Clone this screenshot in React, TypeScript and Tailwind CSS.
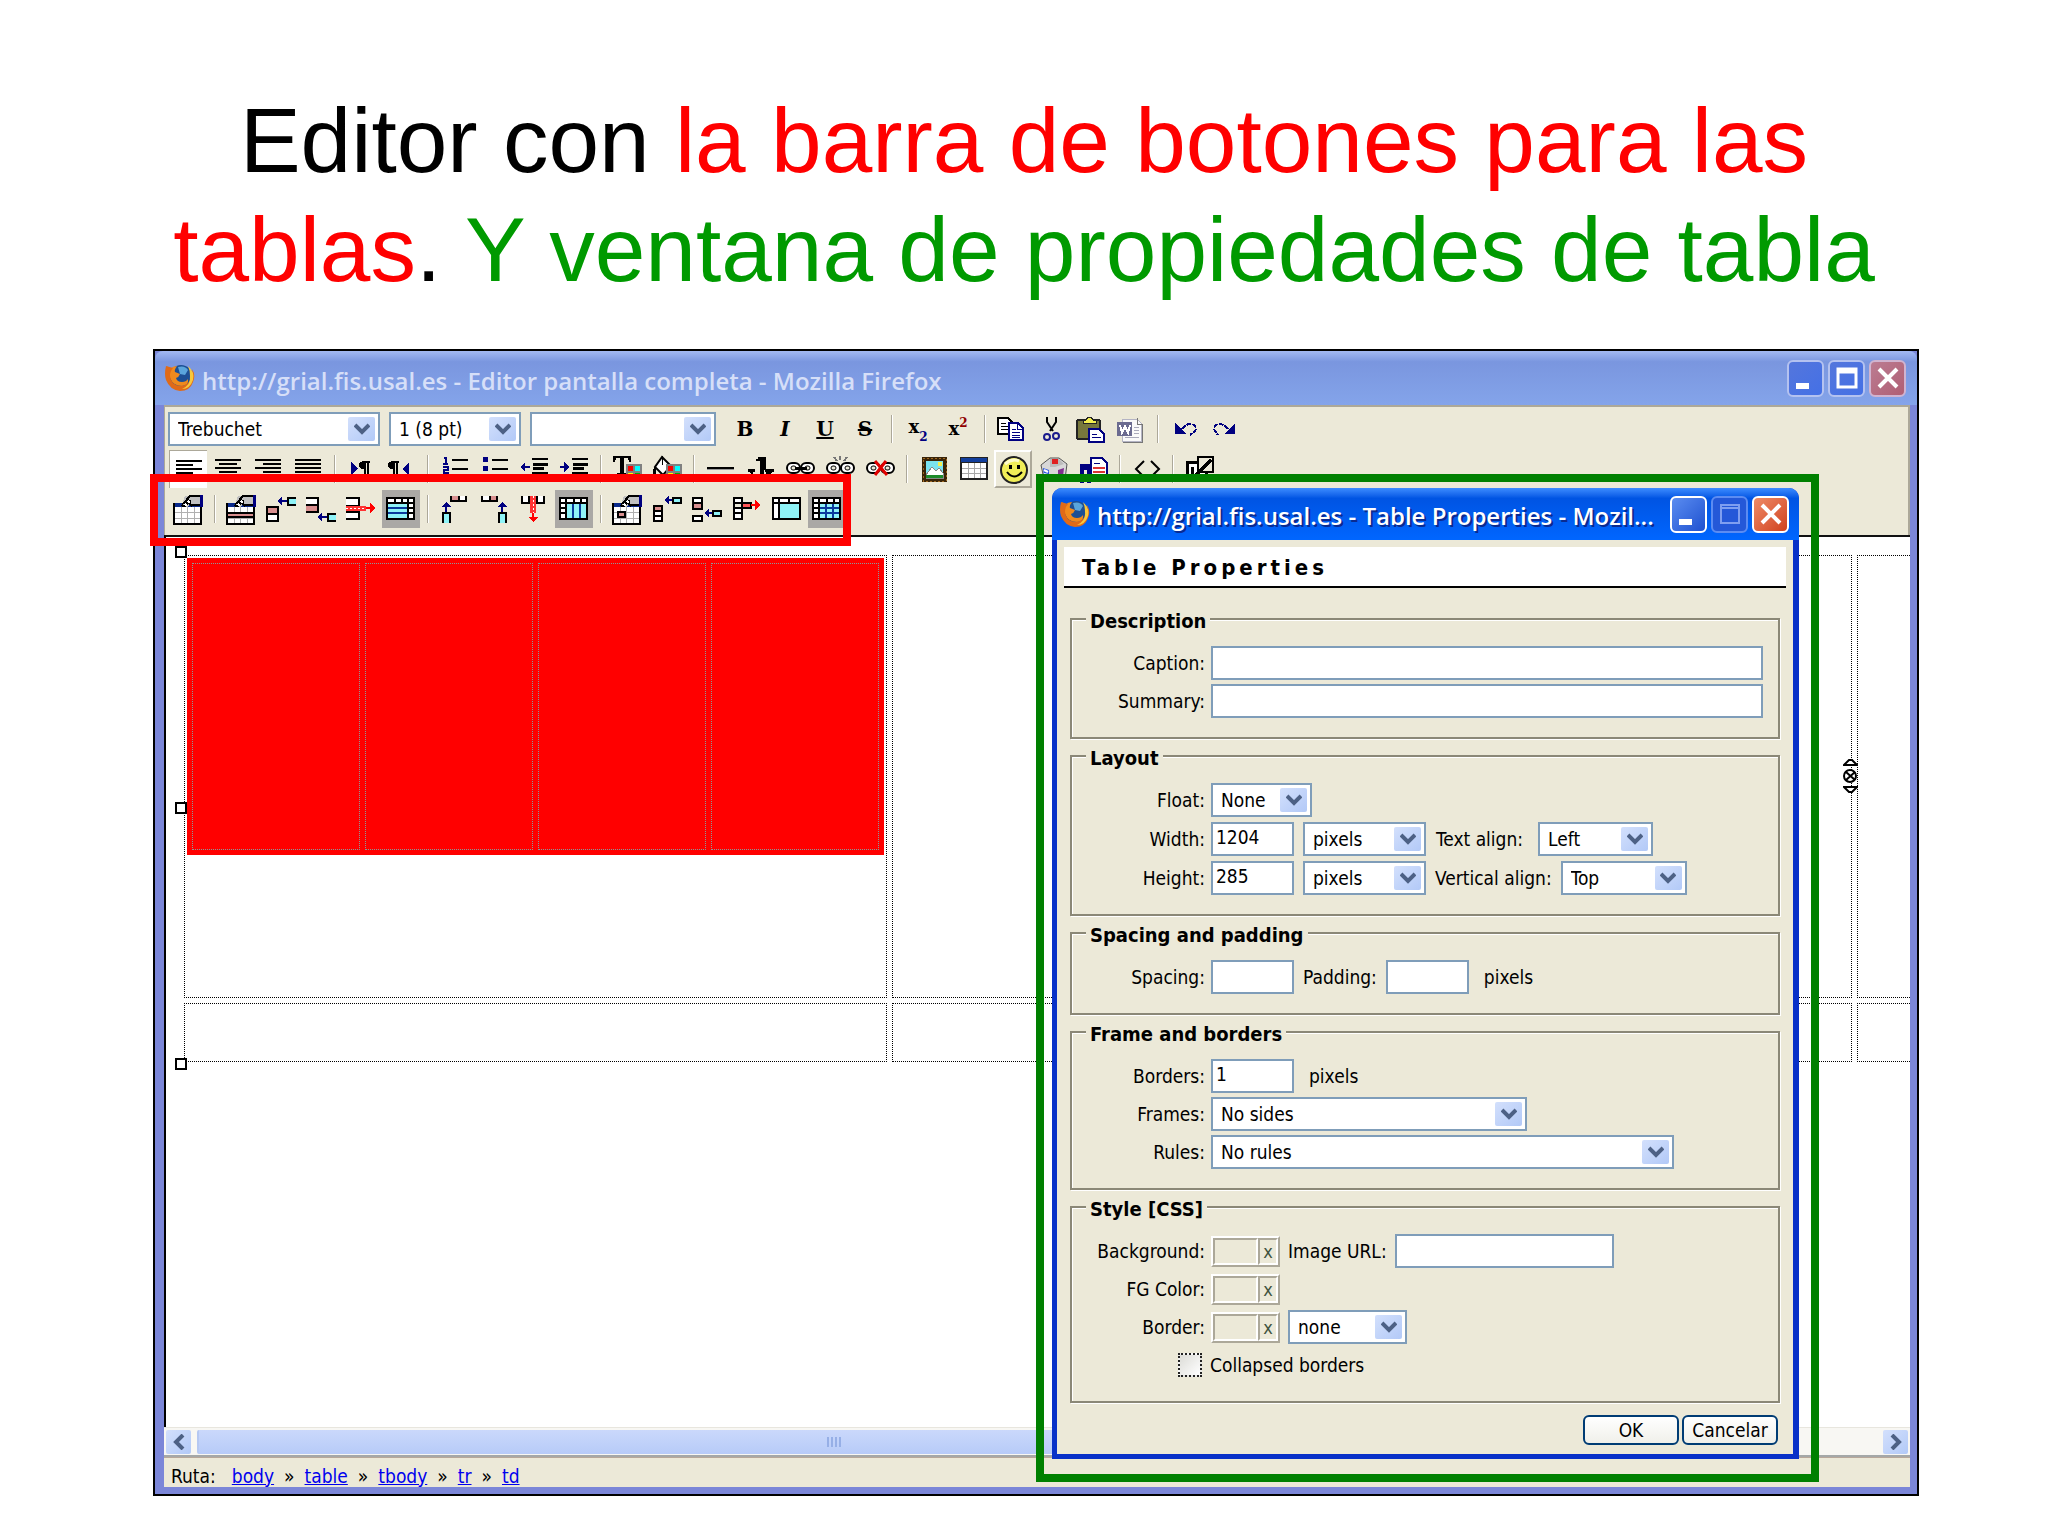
import React from 'react';
import clsx from 'clsx';

const UI_FONT = "font-['DejaVu_Sans_Condensed','DejaVu_Sans',sans-serif]";
const CYAN = '#8ff3f7';
const PINK = '#d98f8f';
const NAVY = '#000080';

/* ---------- toolbar drawings, all on a 28x28 grid ---------- */

const Lines = ({ rows }: { rows: [number, number][] }) => (
  <g fill="#000">
    {rows.map(([x, w], i) => (
      <rect key={i} x={x} y={4 + i * 4} width={w} height="2" />
    ))}
  </g>
);

const ArrowLeft = ({ x, y }: { x: number; y: number }) => (
  <path d={`M${x} ${y}l5 -5v4h5v2h-5v4z`} fill={NAVY} />
);

const ArrowUp = ({ x, y }: { x: number; y: number }) => (
  <path d={`M${x} ${y}l5 5h-4v5h-2v-5h-4z`} fill={NAVY} />
);

const Cell = ({ x, y, w, h, fill = '#fff' }: { x: number; y: number; w: number; h: number; fill?: string }) => (
  <rect x={x} y={y} width={w} height={h} fill={fill} stroke="#000" strokeWidth="2" />
);

const HandTable = ({ children }: { children?: React.ReactNode }) => (
  <>
    <rect x="0" y="9" width="27" height="20" fill="#fff" stroke="#000" strokeWidth="2" />
    <rect x="1" y="8" width="25" height="4" fill="#0a2a8c" />
    <path d="M7 12v16M13 12v16M20 12v16M1 17h25M1 23h25" stroke="#b0b0b0" fill="none" />
    {children}
    <path d="M11 1h15v9h-10l-3 2h-5v-3z" fill="#c0c0c0" />
    <path d="M9 9l7-8h10M26 10h-10" stroke="#000" strokeWidth="2" />
    <path d="M8 10l2 2M12 6l6 5M10 12l6-6M13 4l4 3" stroke="#000" strokeWidth="2" />
    <path d="M11 9l2 2M14 6l2 2" stroke="#fff" strokeWidth="2" />
    <rect x="26" y="0" width="3" height="12" fill={NAVY} />
  </>
);

const TableFrame = ({ children }: { children?: React.ReactNode }) => (
  <>
    <rect x="0" y="3" width="27" height="21" fill="#fff" stroke="#000" strokeWidth="2" />
    {children}
  </>
);

const Swatches = () => (
  <>
    <rect x="13" y="9" width="16" height="16" fill="#808080" />
    <rect x="15" y="11" width="5" height="5" fill="#f00" />
    <rect x="22" y="11" width="5" height="5" fill="#0ff" />
    <rect x="15" y="18" width="5" height="5" fill="#ff0" />
    <rect x="22" y="18" width="5" height="5" fill="#0a0" />
  </>
);

const Chain = () => (
  <g fill="none" shapeRendering="auto">
    <rect x="1" y="8" width="13" height="10" rx="5" stroke="#000" strokeWidth="2" fill="#fff" />
    <rect x="15" y="8" width="13" height="10" rx="5" stroke="#000" strokeWidth="2" fill="#fff" />
    <rect x="5" y="11" width="5" height="4" rx="2" stroke="#000" fill="#ece9d8" />
    <rect x="19" y="11" width="5" height="4" rx="2" stroke="#000" fill="#ece9d8" />
  </g>
);

const Pilcrow = ({ x }: { x: number }) => (
  <path d={`M${x + 4} 6h7v2h-1v15h-2v-15h-1v15h-2v-9h-2l-3-2v-4z`} fill="#000" />
);

const IndentLines = () => (
  <g fill="#000">
    <rect x="12" y="3" width="16" height="2" />
    <rect x="13" y="8" width="15" height="3" />
    <rect x="13" y="12" width="11" height="3" />
    <rect x="12" y="17" width="16" height="2" />
    <rect x="12" y="22" width="16" height="2" />
  </g>
);

const ICONS: Record<string, React.ReactNode> = {
  copy: (
    <>
      <path d="M1 3h10l4 4v12h-14z" fill="#fff" stroke="#000" strokeWidth="2" />
      <path d="M4 8h5M4 11h7M4 14h7" stroke="#000" />
      <path d="M12 8h9l5 5v12h-14z" fill="#fff" stroke={NAVY} strokeWidth="2" />
      <path d="M20 8v6h6M15 14h4M15 17h8M15 20h8M15 22h8" stroke={NAVY} fill="none" />
    </>
  ),
  cut: (
    <g fill="none" shapeRendering="auto">
      <path d="M10 2v5l6 9M19 2v5l-6 9" stroke="#000" strokeWidth="2" />
      <circle cx="10" cy="22" r="3" stroke="#1a1a8c" strokeWidth="2" />
      <circle cx="19" cy="21" r="3" stroke="#1a1a8c" strokeWidth="2" />
    </g>
  ),
  paste: (
    <>
      <rect x="0" y="5" width="23" height="19" rx="2" fill="#77773c" stroke="#222" strokeWidth="2" />
      <path d="M6 8v-3h3l2-3h3l2 3h3v3z" fill="#f2ee50" stroke="#222" />
      <path d="M12 14h10l5 5v8h-15z" fill="#fff" stroke={NAVY} strokeWidth="2" />
      <path d="M15 19h5M15 22h9" stroke={NAVY} />
    </>
  ),
  word: (
    <>
      <path d="M5 4h15l4 4v18h-19z" fill="#fafafa" stroke="#b4b4c4" />
      <path d="M20 3v6h5M6 27h19v-18" stroke="#777" fill="none" />
      <path d="M17 12h5M17 15h5M17 18h5M8 22h14" stroke="#aab" />
      <rect x="0" y="7" width="15" height="14" fill="#6b6b90" />
      <path d="M3 10l2 8 3-7 3 7 2-8" stroke="#fff" strokeWidth="2" fill="none" />
    </>
  ),
  undo: (
    <>
      <path d="M5 8v11h11z" fill={NAVY} />
      <path d="M12 14q5-6 10-5q6 3 3 7l-5 4" stroke={NAVY} strokeWidth="2" fill="none" strokeDasharray="5 1" />
    </>
  ),
  redo: (
    <>
      <path d="M25 8v11h-11z" fill={NAVY} />
      <path d="M18 14q-5-6-10-5q-6 3-3 7l3 4" stroke={NAVY} strokeWidth="2" fill="none" strokeDasharray="5 1" />
    </>
  ),
  alignLeft: <Lines rows={[[1, 26], [1, 17], [1, 26], [1, 17], [1, 26]]} />,
  alignCenter: <Lines rows={[[1, 26], [5, 18], [1, 26], [5, 18], [1, 26]]} />,
  alignRight: <Lines rows={[[1, 26], [9, 18], [1, 26], [9, 18], [1, 26]]} />,
  justify: <Lines rows={[[1, 26], [1, 26], [1, 26], [1, 26], [1, 26]]} />,
  ltr: (
    <>
      <path d="M4 7v13l7-6z" fill={NAVY} />
      <Pilcrow x={12} />
    </>
  ),
  rtl: (
    <>
      <Pilcrow x={1} />
      <path d="M22 7v13l-7-6z" fill={NAVY} />
    </>
  ),
  ol: (
    <>
      <path d="M4 3h2v6M3 9h5M3 12h5v3h-4v3h5" stroke={NAVY} strokeWidth="2" fill="none" />
      <path d="M12 5h16M12 14h16M12 23h16" stroke="#000" strokeWidth="2" />
    </>
  ),
  ul: (
    <>
      <path d="M3 2h5v5h-5zM3 11h5v5h-5zM3 20h5v5h-5z" fill={NAVY} />
      <path d="M12 5h16M12 14h16M12 23h16" stroke="#000" strokeWidth="2" />
    </>
  ),
  outdent: (
    <>
      <path d="M0 12l5-5v4h5v2h-5v4z" fill={NAVY} />
      <IndentLines />
    </>
  ),
  indent: (
    <>
      <path d="M9 12l-5-5v4h-4v2h4v4z" fill={NAVY} />
      <IndentLines />
    </>
  ),
  textColor: (
    <>
      <path d="M0 1h18v6h-2l-1-4h-4v15h3v2h-10v-2h3v-15h-4l-1 4h-2z" fill="#000" />
      <Swatches />
    </>
  ),
  fillColor: (
    <>
      <path d="M9 2l9 9-8 9-8-8z" fill="#fff" stroke="#000" strokeWidth="2" shapeRendering="auto" />
      <path d="M9 1v9M2 12l-2 4v3h3z" stroke="#000" fill="#000" />
      <Swatches />
    </>
  ),
  rule: (
    <>
      <rect x="1" y="12" width="27" height="2" fill="#000" />
      <rect x="1" y="14" width="27" height="1" fill="#999" />
    </>
  ),
  anchor: (
    <>
      <path d="M12 2h8v13h-2v8h-4v-17h-4v-2h2z" fill="#000" />
      <path d="M2 14h7v3h-2v3h13v-3h-1v-3h9v3h-2l-4 8h-14l-4-8h-2z" fill="#000" />
    </>
  ),
  link: (
    <>
      <Chain />
      <rect x="9" y="12" width="12" height="3" fill="#000" />
    </>
  ),
  breakLink: (
    <>
      <Chain />
      <path d="M8 2l3 4M14 1v4M21 2l-3 4" stroke="#777" strokeWidth="2" />
    </>
  ),
  unlink: (
    <>
      <Chain />
      <path d="M9 6l12 14M20 6l-11 14" stroke="#e00000" strokeWidth="3" shapeRendering="auto" />
    </>
  ),
  image: (
    <>
      <rect x="3" y="2" width="25" height="25" fill="#3a2408" />
      <rect x="4" y="3" width="23" height="23" fill="none" stroke="#a06820" strokeDasharray="2 2" />
      <rect x="7" y="6" width="17" height="17" fill="#7be3f0" />
      <path d="M7 20l6-8 4 4 3-3 4 5v5h-17z" fill="#fff" stroke="#888" />
      <rect x="19" y="7" width="4" height="4" fill="#f5ef50" />
      <rect x="7" y="20" width="17" height="3" fill="#1d8a2a" />
    </>
  ),
  table: (
    <>
      <rect x="1" y="2" width="28" height="23" fill="#222" />
      <rect x="2" y="3" width="26" height="4" fill="#123e9c" />
      <rect x="3" y="8" width="24" height="15" fill="#fff" />
      <path d="M9 8v15M15 8v15M21 8v15M3 13h24M3 18h24" stroke="#a8a8a8" />
    </>
  ),
  smiley: (
    <g shapeRendering="auto">
      <circle cx="15" cy="15" r="13" fill="#f1ee58" stroke="#222" strokeWidth="2" />
      <path d="M6 9q7-6 14-3" stroke="#fdfccb" strokeWidth="3" fill="none" />
      <path d="M10 10h3v4h-3zM18 10h3v4h-3z" fill="#000" />
      <path d="M8 17q7 9 15 0" stroke="#000" strokeWidth="2" fill="none" />
    </g>
  ),
  dice: (
    <g shapeRendering="auto">
      <path d="M2 10l9-7h9l8 6-2 15h-21z" fill="#d8d8d8" stroke="#555" />
      <path d="M11 4h9l5 5-9 3h-5z" fill="#bbb" />
      <rect x="13" y="4" width="6" height="5" fill="#e02020" />
      <path d="M4 13l6 2v8h-5z" fill="#2a55e0" />
      <path d="M19 15l6-2-1 9h-5z" fill="#80308c" />
      <path d="M5 15l4 2M5 19l4 1" stroke="#fff" strokeWidth="2" />
    </g>
  ),
  pasteDoc: (
    <>
      <path d="M12 3h11l5 5v17h-16z" fill="#fff" stroke={NAVY} strokeWidth="2" />
      <path d="M15 8h6" stroke={NAVY} />
      <rect x="14" y="12" width="12" height="2" fill="#d33" />
      <rect x="14" y="16" width="12" height="2" fill="#d33" />
      <path d="M1 9h11v19h-4v-13h-3v13h-4z" fill={NAVY} />
    </>
  ),
  source: (
    <path d="M12 6l-8 8 8 8M19 6l8 8-8 8" stroke="#000" strokeWidth="2" fill="none" shapeRendering="auto" />
  ),
  fullscreen: (
    <>
      <rect x="2" y="7" width="19" height="18" fill="#fff" stroke="#000" strokeWidth="3" />
      <rect x="13" y="2" width="15" height="15" fill="#ece9d8" stroke="#000" strokeWidth="2" />
      <path d="M10 21l16-16M7 12v11h9" stroke="#000" strokeWidth="3" fill="none" />
    </>
  ),
  tableProps: <HandTable />,
  rowProps: (
    <HandTable>
      <rect x="0" y="18" width="27" height="4" fill={PINK} stroke="#000" strokeWidth="2" />
    </HandTable>
  ),
  rowAbove: (
    <>
      <Cell x={0} y={19} w={11} h={7} />
      <Cell x={0} y={12} w={11} h={7} fill={PINK} />
      <ArrowLeft x={10} y={6} />
      <path d="M29 3h-8v7h8" fill={CYAN} stroke="#000" strokeWidth="2" />
    </>
  ),
  rowBelow: (
    <>
      <path d="M-1 3h12v7h-12M-1 17h12v-7" fill="#fff" stroke="#000" strokeWidth="2" />
      <rect x="-1" y="11" width="11" height="5" fill={PINK} />
      <ArrowLeft x={10} y={22} />
      <path d="M29 19h-8v7h8" fill={CYAN} stroke="#000" strokeWidth="2" />
    </>
  ),
  rowDelete: (
    <>
      <path d="M-1 3h13v8h-13M-1 24h13v-7h-13" fill="#fff" stroke="#000" strokeWidth="2" />
      <rect x="-1" y="11" width="20" height="5" fill="#f33" />
      <path d="M-1 13h20" stroke="#fff" strokeDasharray="2 2" />
      <path d="M28 13l-5-5v4h-4v2h4v5z" fill="#f00" />
    </>
  ),
  rowSplit: (
    <TableFrame>
      <rect x="1" y="8" width="20" height="15" fill={CYAN} />
      <path d="M1 8h25M8 3v5M15 3v5M21 3v20M21 13h6M21 18h6" stroke="#000" strokeWidth="2" />
      <path d="M1 13h19M1 18h19" stroke="#0a3a9c" strokeWidth="2" />
    </TableFrame>
  ),
  colLeft: (
    <>
      <rect x="11" y="1" width="8" height="6" fill={PINK} />
      <rect x="19" y="1" width="8" height="6" fill="#fff" />
      <path d="M11 1v5h15v-5M19 1v5" stroke="#000" strokeWidth="2" fill="none" />
      <ArrowUp x={6} y={7} />
      <path d="M3 28v-10h7v10" fill={CYAN} stroke="#000" strokeWidth="2" />
    </>
  ),
  colRight: (
    <>
      <rect x="1" y="1" width="8" height="6" fill="#fff" />
      <rect x="9" y="1" width="8" height="6" fill={PINK} />
      <path d="M2 1v5h15v-5M10 1v5" stroke="#000" strokeWidth="2" fill="none" />
      <ArrowUp x={22} y={7} />
      <path d="M19 28v-10h7v10" fill={CYAN} stroke="#000" strokeWidth="2" />
    </>
  ),
  colDelete: (
    <>
      <path d="M2 1v7h7v-7M17 1v7h7v-7" fill="#fff" stroke="#000" strokeWidth="2" />
      <rect x="10" y="1" width="6" height="17" fill="#f33" />
      <path d="M13 1v17" stroke="#fff" strokeDasharray="2 2" />
      <path d="M13 27l5-5h-4v-4h-2v4h-4z" fill="#f00" />
    </>
  ),
  colSplit: (
    <TableFrame>
      <rect x="6" y="8" width="20" height="15" fill={CYAN} />
      <path d="M1 8h25M6 3v20M14 3v5M21 3v5M1 13h5M1 18h5" stroke="#000" strokeWidth="2" />
      <path d="M13 9v14M20 9v14" stroke="#0a3a9c" strokeWidth="2" />
    </TableFrame>
  ),
  cellProps: (
    <HandTable>
      <rect x="5" y="17" width="7" height="5" fill={PINK} stroke="#000" strokeWidth="2" />
    </HandTable>
  ),
  cellBefore: (
    <>
      <Cell x={1} y={21} w={8} h={5} />
      <Cell x={1} y={16} w={8} h={5} />
      <Cell x={1} y={11} w={8} h={5} fill={PINK} />
      <ArrowLeft x={11} y={5} />
      <Cell x={20} y={3} w={8} h={5} fill={CYAN} />
    </>
  ),
  cellAfter: (
    <>
      <Cell x={0} y={3} w={9} h={5} />
      <Cell x={0} y={8} w={9} h={6} fill={PINK} />
      <Cell x={0} y={21} w={9} h={5} />
      <ArrowLeft x={11} y={18} />
      <Cell x={20} y={16} w={8} h={5} fill={CYAN} />
    </>
  ),
  cellDelete: (
    <>
      <Cell x={1} y={3} w={8} h={5} />
      <Cell x={1} y={13} w={8} h={5} />
      <Cell x={1} y={18} w={8} h={6} />
      <path d="M1 8v5" stroke="#000" strokeWidth="2" />
      <rect x="9" y="8" width="9" height="5" fill="#f55" stroke="#000" strokeWidth="2" />
      <path d="M27 10l-5-5v4h-4v2h4v5z" fill="#f00" />
    </>
  ),
  cellMerge: (
    <TableFrame>
      <rect x="6" y="8" width="20" height="15" fill={CYAN} />
      <path d="M1 8h25M6 3v20M16 3v5" stroke="#000" strokeWidth="2" />
    </TableFrame>
  ),
  cellSplit: (
    <TableFrame>
      <rect x="6" y="8" width="20" height="15" fill={CYAN} />
      <path d="M1 8h25M6 3v20M14 3v5M21 3v5M1 13h5M1 18h5" stroke="#000" strokeWidth="2" />
      <path d="M13 9v14M20 9v14M7 13h19M7 18h19" stroke="#0a3a9c" strokeWidth="2" />
    </TableFrame>
  ),
};

const FirefoxIcon = () => (
  <svg viewBox="0 0 30 28" className="h-7 w-[30px] shrink-0" aria-hidden="true">
    <circle cx="16" cy="13" r="12" fill="#1d4f94" />
    <path d="M13 3q7-2 10 3l-3 5-5-1z" fill="#5aa5dc" />
    <path d="M2 2l3 3q3-3 7-3-3 4-2 6l5 2q-1 3-4 4 1 4 6 4 4 0 6-3 1 6-6 7-9 0-12-8z" fill="#f08a1d" />
    <path d="M1 2q-2 8 0 14 4 10 14 11 10 0 13-9 3-7-1-13 1 6-1 9-3 8-11 8-9-1-10-10 0-5 3-8z" fill="#e06a18" />
    <path d="M23 2q7 6 5 14-3 9-11 9 9-4 8-13 0-6-2-10z" fill="#f8c83c" />
  </svg>
);

/* ---------- toolbar parts ---------- */

const ToolButton = ({ name, state }: { name: string; state?: 'on' | 'pressed' | 'raised' }) => (
  <button type="button" aria-label={name} className="flex size-10 items-center justify-center">
    <span
      className={clsx(
        'flex size-[38px] items-center justify-center',
        state === 'on' && 'bg-[#aaa8a5]',
        state === 'pressed' && 'border-t border-l border-[#aca899] bg-white',
        state === 'raised' && 'border-2 border-t-white border-l-white border-r-[#aca899] border-b-[#aca899]',
      )}
    >
      <svg viewBox="0 0 28 28" className="size-7 shrink-0 overflow-visible" shapeRendering="crispEdges" fill="none">
        {ICONS[name]}
      </svg>
    </span>
  </button>
);

const LetterButton = ({ label, children }: { label: string; children: React.ReactNode }) => (
  <button
    type="button"
    aria-label={label}
    className="flex size-10 items-center justify-center font-['DejaVu_Serif',serif] text-xl font-bold"
  >
    {children}
  </button>
);

const Separator = () => (
  <span className="flex h-7 w-[13px] justify-center">
    <span className="w-[2px] border-r border-r-white bg-[#aca899]" />
  </span>
);

const Tools = ({ items }: { items: string[] }) => (
  <>
    {items.map((item, i) => {
      if (item === '|') return <Separator key={i} />;
      const [name, state] = item.split(':');
      return <ToolButton key={i} name={name} state={state as 'on' | 'pressed' | 'raised' | undefined} />;
    })}
  </>
);

const ROW_TWO = [
  'alignLeft:pressed', 'alignCenter', 'alignRight', 'justify', '|', 'ltr', 'rtl', '|', 'ol', 'ul', 'outdent', 'indent',
  '|', 'textColor', 'fillColor', '|', 'rule', 'anchor', 'link', 'breakLink', 'unlink', '|', 'image', 'table',
  'smiley:raised', 'dice', 'pasteDoc', '|', 'source', '|', 'fullscreen',
];

const ROW_THREE = [
  'tableProps', '|', 'rowProps', 'rowAbove', 'rowBelow', 'rowDelete', 'rowSplit:on', '|', 'colLeft', 'colRight',
  'colDelete', 'colSplit:on', '|', 'cellProps', 'cellBefore', 'cellAfter', 'cellDelete', 'cellMerge', 'cellSplit:on',
];

/* ---------- form controls ---------- */

type SelectProps = { value: string; width: string; id?: string; label?: string };

const Select = ({ value, width, id, label }: SelectProps) => (
  <span className={clsx('relative inline-flex h-[34px]', width)}>
    <select
      id={id}
      aria-label={label}
      defaultValue={value}
      className="h-full w-full appearance-none rounded-none border-2 border-[#7f9db9] bg-white pl-2 text-black"
    >
      <option>{value}</option>
    </select>
    <span className="pointer-events-none absolute top-[5px] right-[5px] flex h-6 w-[27px] items-center justify-center rounded-xs bg-gradient-to-br from-[#d3e0fc] to-[#b2c9f7]">
      <svg viewBox="0 0 16 12" className="h-3 w-4" fill="none">
        <path d="M1 2l7 7 7-7" stroke="#4d6185" strokeWidth="4" />
      </svg>
    </span>
  </span>
);

const Input = ({ id, value = '', width }: { id: string; value?: string; width: string }) => (
  <input
    id={id}
    defaultValue={value}
    className={clsx('h-[34px] rounded-none border-2 border-[#7f9db9] bg-white pb-1 pl-[3px] text-black', width)}
  />
);

const Row = ({ label, htmlFor, children }: { label: string; htmlFor: string; children: React.ReactNode }) => (
  <div className="flex h-[34px] items-center">
    <label htmlFor={htmlFor} className="mr-[6px] w-[133px] text-right">{label}</label>
    {children}
  </div>
);

const Group = ({ title, gap = 'gap-1', children }: { title: string; gap?: string; children: React.ReactNode }) => (
  <fieldset className="mx-[13px] mt-[3px] border-2 border-[#8b8877] pb-[19px] shadow-[1px_1px_0_#fff,inset_1px_1px_0_#fff]">
    <legend className="ml-[14px] bg-[#ece9d8] px-1 pt-1 text-xl leading-6 font-bold">{title}</legend>
    <div className={clsx('flex flex-col pt-[13px] pr-[15px]', gap)}>{children}</div>
  </fieldset>
);

const ColorPicker = ({ id }: { id: string }) => (
  <span className="mr-2 flex h-[31px] w-[69px] border-2 border-t-white border-r-[#aca899] border-b-[#aca899] border-l-white">
    <button
      id={id}
      type="button"
      aria-label="color"
      className="flex-1 border-2 border-t-[#aca899] border-r-white border-b-white border-l-[#aca899]"
    />
    <button
      type="button"
      className="w-5 border-2 border-t-[#aca899] border-r-white border-b-white border-l-[#aca899] text-center text-lg leading-6 text-[#40533e]"
    >
      x
    </button>
  </span>
);

/* ---------- window title buttons ---------- */

const TITLE_BUTTON = 'flex size-[37px] items-center justify-center rounded-md border-2';

const TitleButtons = ({ active }: { active?: boolean }) => (
  <div className="ml-auto flex gap-1">
    <button
      type="button"
      aria-label="Minimize"
      className={clsx(
        TITLE_BUTTON,
        active ? 'border-white bg-gradient-to-br from-[#5b8cf0] to-[#1f50d0]' : 'border-[#b4c2f0] bg-gradient-to-br from-[#5476dc] to-[#4470e6]',
      )}
    >
      <svg viewBox="0 0 24 24" className="size-6"><rect x="2" y="17" width="13" height="6" fill="#fff" /></svg>
    </button>
    <button
      type="button"
      aria-label="Maximize"
      className={clsx(
        TITLE_BUTTON,
        active ? 'border-[#5c8cf2] bg-[#2458d8]' : 'border-[#b4c2f0] bg-gradient-to-br from-[#5476dc] to-[#4470e6]',
      )}
    >
      <svg viewBox="0 0 24 24" className="size-6" fill="none">
        <path d="M3 3h18v18h-18zM3 6h18" stroke={active ? '#7f9ff0' : '#fff'} strokeWidth={active ? 2 : 3} />
      </svg>
    </button>
    <button
      type="button"
      aria-label="Close"
      className={clsx(
        TITLE_BUTTON,
        active ? 'border-white bg-gradient-to-br from-[#ee8a66] to-[#d0401a]' : 'border-[#d0b4d0] bg-gradient-to-br from-[#bb7c92] to-[#b05f74]',
      )}
    >
      <svg viewBox="0 0 24 24" className="size-6" fill="none">
        <path d="M3 3l18 18M21 3l-18 18" stroke="#fff" strokeWidth="4" />
      </svg>
    </button>
  </div>
);

/* ---------- windows ---------- */

const Handle = ({ className }: { className: string }) => (
  <span className={clsx('absolute left-[9px] size-3 border-2 border-black bg-white', className)} />
);

const CELL = 'border border-dotted border-black align-top';

const EditArea = () => (
  <div className="relative overflow-hidden border-t-2 border-l-2 border-t-[#111] border-l-black bg-white pt-[13px] pb-[360px] pl-[13px]">
    <table className="w-[calc(100%+5px)] table-fixed border-separate border-spacing-[5px]">
      <colgroup>
        <col className="w-[703px]" />
        <col />
        <col className="w-[53px]" />
      </colgroup>
      <tbody>
        <tr className="h-[443px]">
          <td className={clsx(CELL, 'p-[2px]')}>
            <table className="w-full table-fixed border-separate border-spacing-[5px] bg-[#f00]">
              <tbody>
                <tr className="h-[287px]">
                  {[0, 1, 2, 3].map((n) => (
                    <td key={n} className="border border-dotted border-[#8a9a9a]" />
                  ))}
                </tr>
              </tbody>
            </table>
          </td>
          <td className={CELL} />
          <td className={clsx(CELL, 'border-r-0')} />
        </tr>
        <tr className="h-[59px]">
          <td className={CELL} />
          <td className={CELL} />
          <td className={clsx(CELL, 'border-r-0')} />
        </tr>
      </tbody>
    </table>
    <Handle className="top-[9px]" />
    <Handle className="top-[265px]" />
    <Handle className="top-[521px]" />
    <svg viewBox="0 0 15 36" className="absolute top-[221px] right-[52px] h-9 w-[15px]" fill="#fff" stroke="#000" strokeWidth="2">
      <path d="M1 7h13l-5-5h-3zM1 29h13l-5 5h-3z" />
      <circle cx="7" cy="18" r="6" />
      <path d="M3 14l9 8M12 14l-9 8" />
    </svg>
  </div>
);

const ScrollBar = () => (
  <div className="flex h-[30px] items-center border-t border-b-2 border-t-[#e8e6de] border-b-[#a5a8a8] bg-[#f8f7f3] px-[2px]">
    <button type="button" aria-label="Scroll left" className="flex h-6 w-[25px] items-center justify-center rounded-xs bg-gradient-to-br from-[#d3e0fc] to-[#b2c9f7]">
      <svg viewBox="0 0 12 16" className="h-4 w-3" fill="none"><path d="M10 1l-7 7 7 7" stroke="#4d6185" strokeWidth="4" /></svg>
    </button>
    <div className="ml-1.5 flex h-6 w-[73%] items-center justify-center gap-[2px] rounded-xs border-l-2 border-[#b5c8f2] bg-gradient-to-b from-[#cad8fb] to-[#b7cbf8]">
      {[0, 1, 2, 3].map((n) => (
        <span key={n} className="h-2.5 w-[2px] bg-[#96afe6]" />
      ))}
    </div>
    <button type="button" aria-label="Scroll right" className="ml-auto flex h-6 w-[25px] items-center justify-center rounded-xs bg-gradient-to-br from-[#d3e0fc] to-[#b2c9f7]">
      <svg viewBox="0 0 12 16" className="h-4 w-3" fill="none"><path d="M2 1l7 7-7 7" stroke="#4d6185" strokeWidth="4" /></svg>
    </button>
  </div>
);

const PATH = ['body', 'table', 'tbody', 'tr', 'td'];

const EditorWindow = () => (
  <section className="overflow-hidden border-2 border-black bg-[#7b86d8]">
    <header className="flex h-[54px] items-center rounded-t-lg bg-gradient-to-b from-[#a3b9f2] via-[#7a96df] via-20% to-[#84a4ea] pr-[11px] pl-[10px]">
      <FirefoxIcon />
      <h2 className="ml-[7px] pt-[6px] font-['Open_Sans',sans-serif] text-2xl font-semibold text-[#d6dff8]">
        http://grial.fis.usal.es - Editor pantalla completa - Mozilla Firefox
      </h2>
      <TitleButtons />
    </header>
    <div className={clsx('mr-[7px] mb-[7px] ml-[9px] bg-[#ece9d8] text-[19px] leading-6', UI_FONT)}>
      <div className="border-t-2 border-r-2 border-l border-[#aca899] pt-[2px] pb-[6px] pl-[3px]">
        <div className="flex h-10 items-center gap-[9px]">
          <Select value="Trebuchet" width="w-[212px]" label="Font" />
          <Select value="1 (8 pt)" width="w-[132px]" label="Size" />
          <Select value="" width="w-[186px]" label="Format" />
          <div className="flex items-center">
            <LetterButton label="Bold">B</LetterButton>
            <LetterButton label="Italic"><i>I</i></LetterButton>
            <LetterButton label="Underline"><u>U</u></LetterButton>
            <LetterButton label="Strike"><s>S</s></LetterButton>
            <Separator />
            <LetterButton label="Subscript">
              <span className="pb-1 text-lg leading-5">x</span>
              <span className="self-end pb-1 text-xs text-[#000080]">2</span>
            </LetterButton>
            <LetterButton label="Superscript">
              <span className="text-lg leading-5">x</span>
              <span className="self-start pt-1.5 text-xs text-[#900000]">2</span>
            </LetterButton>
            <Separator />
            <Tools items={['copy', 'cut', 'paste', 'word', '|', 'undo', 'redo']} />
          </div>
        </div>
        <div className="flex h-10 items-center"><Tools items={ROW_TWO} /></div>
        <div className="flex h-10 items-center"><Tools items={ROW_THREE} /></div>
      </div>
      <EditArea />
      <ScrollBar />
      <nav className="flex h-[30px] items-center gap-[10px] border-t border-[#b8a89a] pt-[6px] pl-[7px]">
        <span className="mr-1.5">Ruta:</span>
        {PATH.map((tag, i) => (
          <React.Fragment key={tag}>
            {i > 0 && <span>»</span>}
            <a href="#" className="text-[#0000ee] underline">{tag}</a>
          </React.Fragment>
        ))}
      </nav>
    </div>
  </section>
);

const DialogWindow = () => (
  <section className="overflow-hidden rounded-t-[10px] bg-[#0831c8]">
    <header className="flex h-[52px] items-center bg-gradient-to-b from-[#3c8cff] via-[#0054e3] via-20% to-[#0066ff] pr-[10px] pl-2">
      <FirefoxIcon />
      <h2 className="ml-[7px] pt-1 font-['Open_Sans',sans-serif] text-2xl font-semibold text-white [text-shadow:2px_2px_0_#0a2a90]">
        http://grial.fis.usal.es - Table Properties - Mozil...
      </h2>
      <TitleButtons active />
    </header>
    <form className={clsx('mr-[6px] mb-[5px] ml-[5px] bg-[#ece9d8] pt-[7px] pb-[9px] text-[19px] leading-6', UI_FONT)}>
      <h3 className="mx-[7px] mb-[17px] border-b-2 border-black bg-white px-[18px] pt-[7px] pb-1 text-[22px] leading-7 font-bold tracking-[4px]">
        Table Properties
      </h3>

      <Group title="Description">
        <Row label="Caption:" htmlFor="caption"><Input id="caption" width="flex-1" /></Row>
        <Row label="Summary:" htmlFor="summary"><Input id="summary" width="flex-1" /></Row>
      </Group>

      <Group title="Layout" gap="gap-[5px]">
        <Row label="Float:" htmlFor="float"><Select id="float" value="None" width="w-[101px]" /></Row>
        <Row label="Width:" htmlFor="width">
          <Input id="width" value="1204" width="mr-[9px] w-[83px]" />
          <Select value="pixels" width="w-[123px]" label="Width unit" />
          <label htmlFor="textalign" className="mx-[10px] w-[92px]">Text align:</label>
          <Select id="textalign" value="Left" width="w-[115px]" />
        </Row>
        <Row label="Height:" htmlFor="height">
          <Input id="height" value="285" width="mr-[9px] w-[83px]" />
          <Select value="pixels" width="w-[123px]" label="Height unit" />
          <label htmlFor="valign" className="mx-[9px]">Vertical align:</label>
          <Select id="valign" value="Top" width="w-[126px]" />
        </Row>
      </Group>

      <Group title="Spacing and padding">
        <Row label="Spacing:" htmlFor="spacing">
          <Input id="spacing" width="w-[83px]" />
          <label htmlFor="padding" className="mx-[9px]">Padding:</label>
          <Input id="padding" width="mr-[15px] w-[83px]" />
          <span>pixels</span>
        </Row>
      </Group>

      <Group title="Frame and borders">
        <Row label="Borders:" htmlFor="borders">
          <Input id="borders" value="1" width="mr-[15px] w-[83px]" />
          <span>pixels</span>
        </Row>
        <Row label="Frames:" htmlFor="frames"><Select id="frames" value="No sides" width="w-[316px]" /></Row>
        <Row label="Rules:" htmlFor="rules"><Select id="rules" value="No rules" width="w-[463px]" /></Row>
      </Group>

      <Group title="Style [CSS]">
        <Row label="Background:" htmlFor="bg">
          <ColorPicker id="bg" />
          <label htmlFor="image" className="mr-2">Image URL:</label>
          <Input id="image" width="w-[219px]" />
        </Row>
        <Row label="FG Color:" htmlFor="fg">
          <ColorPicker id="fg" />
        </Row>
        <Row label="Border:" htmlFor="bc">
          <ColorPicker id="bc" />
          <Select value="none" width="w-[119px]" label="Border style" />
        </Row>
        <div className="flex h-[34px] items-center">
          <span className="mr-2 flex w-[130px] justify-end">
            <input
              id="collapse"
              type="checkbox"
              className="size-6 appearance-none border-2 border-dotted border-[#222] bg-gradient-to-br from-[#dcdcd7] to-white"
            />
          </span>
          <label htmlFor="collapse">Collapsed borders</label>
        </div>
      </Group>

      <div className="mx-[15px] mt-3 flex justify-end gap-[3px]">
        {['OK', 'Cancelar'].map((name) => (
          <button
            key={name}
            type="button"
            className="h-[30px] w-24 rounded-md border-2 border-[#003c74] bg-gradient-to-b from-white to-[#f0f0ea] leading-6"
          >
            {name}
          </button>
        ))}
      </div>
    </form>
  </section>
);

export default function App() {
  return (
    <main className="min-h-screen bg-white pt-[86px] pb-10">
      <h1 className="text-center font-['Liberation_Sans',Arial,sans-serif] text-[91px] leading-[109px] text-black">
        Editor con <span className="text-[#f00]">la barra de botones para las<br />tablas</span>.{' '}
        <span className="text-[#009a00]">Y ventana de propiedades de tabla</span>
      </h1>
      <div className="relative mt-[45px] mr-[129px] ml-[153px]">
        <EditorWindow />
        <div className="pointer-events-none absolute top-[125px] -left-[3px] h-[72px] w-[701px] border-8 border-[#f00]" />
        <div className="absolute top-[125px] right-[100px] w-[783px] border-8 border-[#008000] pt-[6px] pr-[12px] pb-[15px] pl-2">
          <DialogWindow />
        </div>
      </div>
    </main>
  );
}
